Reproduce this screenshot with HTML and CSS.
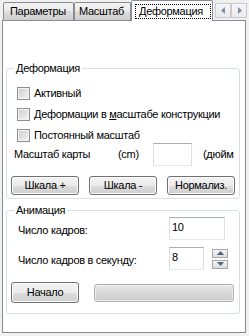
FILE: index.html
```html
<!DOCTYPE html>
<html>

<head lang="ru">
  <meta charset="UTF-8">
  <title>Деформация</title>
  <link rel="stylesheet" href="styles.css">
</head>

<body>
  <div class="window">
    <div class="tabstrip">
      <div class="tab t1">Параметры</div>
      <div class="tab t2">Масштаб</div>
      <div class="tab active"><span class="focus">Деформация</span></div>
      <div class="scroller">
        <span class="sbtn"><svg width="5" height="7" viewBox="0 0 5 7"><path d="M4 0L0 3.5L4 7Z" fill="#7a8fb0"/></svg></span>
        <span class="sbtn"><svg width="5" height="7" viewBox="0 0 5 7"><path d="M1 0L5 3.5L1 7Z" fill="#7a8fb0"/></svg></span>
      </div>
    </div>

    <div class="page">
      <!-- группа деформации -->
      <fieldset class="group deform">
        <legend>Деформация</legend>
        <div class="check first"><span class="box"></span><span>Активный</span></div>
        <div class="check"><span class="box"></span><span>Деформации в <u>м</u>асштабе конструкции</span></div>
        <div class="check"><span class="box"></span><span>Постоянный масштаб</span></div>
        <div class="scale-row">
          <span class="scale-lbl">Масштаб карты</span>
          <span class="unit">(cm)</span>
          <span class="field scale-input"></span>
          <span class="unit2">(дюйм</span>
        </div>
        <div class="btn-row">
          <span class="btn">Шкала +</span>
          <span class="btn">Шкала -</span>
          <span class="btn">Нормализ.</span>
        </div>
      </fieldset>

      <!-- группа анимации -->
      <fieldset class="group anim">
        <legend>Анимация</legend>
        <div class="arow first">
          <span class="alabel">Число кадров:</span>
          <span class="field frames">10</span>
        </div>
        <div class="arow second">
          <span class="alabel">Число кадров в секунду:</span>
          <span class="field fps">8</span>
          <span class="spin">
            <span class="spin-btn"><svg width="7" height="4" viewBox="0 0 7 4"><path d="M0 4L3.5 0L7 4Z" fill="#4d6185"/></svg></span>
            <span class="spin-btn"><svg width="7" height="4" viewBox="0 0 7 4"><path d="M0 0L3.5 4L7 0Z" fill="#4d6185"/></svg></span>
          </span>
        </div>
        <div class="start-row">
          <span class="btn start">Начало</span>
          <span class="progress"></span>
        </div>
      </fieldset>
    </div>
  </div>
</body>

</html>
```

FILE: styles.css
```css
/*reset*/
body,
fieldset,
legend {
  margin: 0;
  padding: 0;
}

body {
  background: #f0f0f0;
  font: 11px/13px "Liberation Sans", Arial, sans-serif;
  letter-spacing: -0.3px;
  color: #000;
}

.window {
  width: 249px;
  height: 336px;
}

/*вкладки*/
.tabstrip {
  display: flex;
  align-items: flex-end;
  height: 21px;
  padding-left: 3px;
  margin-bottom: -1px;
  position: relative;
  z-index: 1;
}

.tab {
  box-sizing: border-box;
  height: 18px;
  border: 1px solid #898c95;
  border-bottom: 0;
  border-radius: 2px 2px 0 0;
  background: linear-gradient(#f2f2f2, #ebebeb 50%, #dddddd 50%, #cfcfcf);
  padding: 2px 0 0 6px;
  margin-bottom: 1px;
  white-space: nowrap;
}

.t1 {
  width: 71px;
}

.t2 {
  width: 57px;
  padding-left: 4px;
}

.active {
  width: 82px;
  height: 21px;
  margin-bottom: 0;
  background: #fff;
  padding: 3px 0 0 3px;
}

.focus {
  display: block;
  width: 68px;
  height: 13px;
  border: 1px dotted #000;
  padding: 0 3px 0 3px;
  line-height: 13px;
}

.scroller {
  display: flex;
  align-self: flex-start;
  margin: 3px 0 0 2px;
}

.sbtn {
  box-sizing: border-box;
  width: 16px;
  height: 15px;
  border: 1px solid #c9cbd0;
  background: linear-gradient(#f7f7f7, #e9e9e9);
  display: flex;
  align-items: center;
  justify-content: center;
}

/*страница*/
.page {
  box-sizing: border-box;
  width: 244px;
  height: 313px;
  margin-left: 2px;
  border: 1px solid #898c95;
  background: #fff;
  padding: 41px 5px 0 3px;
}

.group {
  border: 1px solid #d5dfe5;
  border-radius: 3px;
  min-width: 0;
}

.group legend {
  margin-left: 7px;
  padding: 0 2px;
  line-height: 13px;
}

.deform {
  padding: 0 0 3px 0;
}

.anim {
  margin-top: 5px;
  padding: 0 0 10px 0;
}

/*флажки*/
.check {
  display: flex;
  align-items: center;
  height: 13px;
  margin: 8px 0 0 10px;
  white-space: nowrap;
}

.check.first {
  margin-top: 12px;
}

.box {
  box-sizing: border-box;
  width: 13px;
  height: 13px;
  border: 1px solid #8e8f8f;
  background: linear-gradient(135deg, #cbcbcb, #f6f6f6);
  box-shadow: inset 0 0 0 1px #f4f4f4;
  margin-right: 4px;
  flex-shrink: 0;
}

.scale-row {
  display: flex;
  align-items: center;
  height: 23px;
  margin: 1px 0 0 7px;
}

.scale-lbl {
  width: 104px;
}

.unit {
  width: 35px;
}

.field {
  box-sizing: border-box;
  border: 1px solid #dbdfe6;
  border-top-color: #abadb3;
  border-bottom-color: #e3e9ef;
  background: #fff;
  padding: 3px 0 0 2px;
}

.scale-input {
  width: 39px;
  height: 23px;
}

.unit2 {
  margin-left: 11px;
  white-space: nowrap;
}

.btn-row {
  display: flex;
  gap: 10px;
  margin: 10px 0 0 4px;
}

.btn {
  box-sizing: border-box;
  width: 68px;
  height: 19px;
  border: 1px solid #707070;
  border-radius: 3px;
  background: linear-gradient(#f2f2f2, #ebebeb 50%, #dddddd 50%, #cfcfcf);
  box-shadow: inset 0 0 0 1px #fbfbfb;
  display: flex;
  align-items: center;
  justify-content: center;
}

/*анимация*/
.arow {
  display: flex;
  align-items: center;
  margin-left: 11px;
}

.alabel {
  width: 151px;
  padding-top: 4px;
}

.frames {
  width: 56px;
  height: 23px;
}

.arow.second {
  margin-top: 7px;
}

.fps {
  width: 35px;
  height: 23px;
}

.spin {
  display: flex;
  flex-direction: column;
  gap: 2px;
  margin-left: 8px;
}

.spin-btn {
  box-sizing: border-box;
  width: 16px;
  height: 9px;
  border: 1px solid #a7a7a7;
  background: linear-gradient(#f5f5f5, #dcdcdc);
  display: flex;
  align-items: center;
  justify-content: center;
}

.start-row {
  display: flex;
  align-items: center;
  margin: 12px 0 0 4px;
}

.start {
  height: 21px;
}

.progress {
  box-sizing: border-box;
  width: 140px;
  height: 18px;
  margin-left: 15px;
  border: 1px solid #b2b2b2;
  border-radius: 3px;
  background: linear-gradient(#e9e9e9, #dadada 40%, #cdcdcd);
  box-shadow: inset 0 0 0 1px #ececec;
}
```
